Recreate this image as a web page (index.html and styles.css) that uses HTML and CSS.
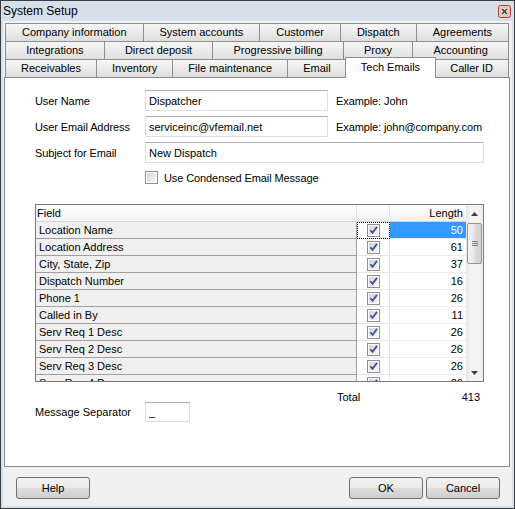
FILE: index.html
```html
<!DOCTYPE html>
<html lang="en">
<head>
  <meta charset="UTF-8">
  <meta name="viewport" content="width=device-width, initial-scale=1.0">
  <title>System Setup</title>
  <link rel="stylesheet" href="styles.css">
</head>
<body>
  <!-- shared checkbox drawings -->
  <svg class="defs" width="0" height="0">
    <defs>
      <linearGradient id="boxfill" x1="0" y1="0" x2="1" y2="1">
        <stop offset="0" stop-color="#d4d4d4"/>
        <stop offset="1" stop-color="#f8f8f8"/>
      </linearGradient>
      <symbol id="box" viewBox="0 0 13 13">
        <rect x="0.5" y="0.5" width="12" height="12" fill="#fff" stroke="#8f8f8f"/>
        <rect x="2" y="2" width="9" height="9" fill="url(#boxfill)"/>
      </symbol>
      <symbol id="check" viewBox="0 0 13 13">
        <use href="#box"/>
        <path d="M3.3 6.2l2.2 2.7 4.5-6" fill="none" stroke="#3d51a3" stroke-width="1.8"/>
      </symbol>
    </defs>
  </svg>

  <div class="window">
    <div class="titlebar">
      <span>System Setup</span>
      <svg class="close" width="13" height="13" viewBox="0 0 13 13">
        <rect x="0.5" y="0.5" width="12" height="12" rx="2" fill="#ecc3bb" stroke="#a3473c"/>
        <path d="M4 4l5 5M9 4l-5 5" stroke="#fff" stroke-width="3"/>
        <path d="M4 4l5 5M9 4l-5 5" stroke="#333" stroke-width="1.5"/>
      </svg>
    </div>

    <div class="client">
      <!-- tab rows -->
      <div class="tabs">
        <div class="tab-row">
          <div class="tab">Company information</div>
          <div class="tab">System accounts</div>
          <div class="tab">Customer</div>
          <div class="tab">Dispatch</div>
          <div class="tab">Agreements</div>
        </div>
        <div class="tab-row">
          <div class="tab">Integrations</div>
          <div class="tab">Direct deposit</div>
          <div class="tab">Progressive billing</div>
          <div class="tab">Proxy</div>
          <div class="tab">Accounting</div>
        </div>
        <div class="tab-row">
          <div class="tab">Receivables</div>
          <div class="tab">Inventory</div>
          <div class="tab">File maintenance</div>
          <div class="tab">Email</div>
          <div class="tab active">Tech Emails</div>
          <div class="tab">Caller ID</div>
        </div>
      </div>

      <div class="panel">
        <div class="form">
          <label>User Name</label>
          <input class="field" type="text" value="Dispatcher">
          <span>Example: John</span>

          <label>User Email Address</label>
          <input class="field" type="text" value="serviceinc@vfemail.net">
          <span>Example: john@company.com</span>

          <label>Subject for Email</label>
          <input class="field wide" type="text" value="New Dispatch">

          <div class="check-line">
            <svg class="cb"><use href="#box"/></svg>
            <span>Use Condensed Email Message</span>
          </div>
        </div>

        <div class="grid">
          <div class="grid-body">
            <div class="grid-head">
              <div class="c-field">Field</div>
              <div class="c-chk"></div>
              <div class="c-len">Length</div>
            </div>
            <div class="grid-row">
              <div class="c-field">Location Name</div>
              <div class="c-chk focus"><svg class="cb"><use href="#check"/></svg></div>
              <div class="c-len selected">50</div>
            </div>
            <div class="grid-row">
              <div class="c-field">Location Address</div>
              <div class="c-chk"><svg class="cb"><use href="#check"/></svg></div>
              <div class="c-len">61</div>
            </div>
            <div class="grid-row">
              <div class="c-field">City, State, Zip</div>
              <div class="c-chk"><svg class="cb"><use href="#check"/></svg></div>
              <div class="c-len">37</div>
            </div>
            <div class="grid-row">
              <div class="c-field">Dispatch Number</div>
              <div class="c-chk"><svg class="cb"><use href="#check"/></svg></div>
              <div class="c-len">16</div>
            </div>
            <div class="grid-row">
              <div class="c-field">Phone 1</div>
              <div class="c-chk"><svg class="cb"><use href="#check"/></svg></div>
              <div class="c-len">26</div>
            </div>
            <div class="grid-row">
              <div class="c-field">Called in By</div>
              <div class="c-chk"><svg class="cb"><use href="#check"/></svg></div>
              <div class="c-len">11</div>
            </div>
            <div class="grid-row">
              <div class="c-field">Serv Req 1 Desc</div>
              <div class="c-chk"><svg class="cb"><use href="#check"/></svg></div>
              <div class="c-len">26</div>
            </div>
            <div class="grid-row">
              <div class="c-field">Serv Req 2 Desc</div>
              <div class="c-chk"><svg class="cb"><use href="#check"/></svg></div>
              <div class="c-len">26</div>
            </div>
            <div class="grid-row">
              <div class="c-field">Serv Req 3 Desc</div>
              <div class="c-chk"><svg class="cb"><use href="#check"/></svg></div>
              <div class="c-len">26</div>
            </div>
            <div class="grid-row">
              <div class="c-field">Serv Req 4 Desc</div>
              <div class="c-chk"><svg class="cb"><use href="#check"/></svg></div>
              <div class="c-len">26</div>
            </div>
          </div>
          <div class="vscroll">
            <div class="sb-btn">
              <svg width="7" height="4" viewBox="0 0 7 4"><path d="M0 4h7L3.5 0z" fill="#3c3c3c"/></svg>
            </div>
            <div class="sb-thumb"><span class="sb-grip"></span></div>
            <div class="sb-btn down">
              <svg width="7" height="4" viewBox="0 0 7 4"><path d="M0 0h7L3.5 4z" fill="#3c3c3c"/></svg>
            </div>
          </div>
        </div>

        <div class="total-row">
          <span>Total</span>
          <span class="total-val">413</span>
        </div>

        <div class="sep-row">
          <label>Message Separator</label>
          <input class="field small" type="text" value="_">
        </div>
      </div>

      <div class="footer">
        <button class="btn">Help</button>
        <span class="spacer"></span>
        <button class="btn">OK</button>
        <button class="btn">Cancel</button>
      </div>
    </div>
  </div>
</body>
</html>
```

FILE: styles.css
```css
body {
  margin: 0;
  font-family: "Liberation Sans", Arial, sans-serif;
  font-size: 11px;
  color: #000;
}

.defs {
  position: absolute;
  width: 0;
  height: 0;
}

/* window frame */
.window {
  width: 515px;
  height: 509px;
  box-sizing: border-box;
  border: 1px solid #3a3e44;
  background: #d6e0eb;
  padding: 0 2px 2px;
  display: flex;
  flex-direction: column;
}

.titlebar {
  height: 20px;
  flex: none;
  display: flex;
  align-items: center;
  justify-content: space-between;
  font-size: 12px;
  padding-right: 1px;
}

.close {
  display: block;
}

.client {
  flex: 1;
  background: #f0f0f0;
  padding: 2px 2px 0 1px;
  display: flex;
  flex-direction: column;
}

/* tabs */
.tabs {
  margin: 0 1px;
}

.tab-row {
  display: flex;
  height: 18px;
  align-items: flex-start;
}

.tab {
  flex: 1 1 auto;
  height: 18px;
  box-sizing: border-box;
  border: 1px solid #8e8f8f;
  border-bottom: none;
  margin-right: -1px;
  padding: 0 4px;
  background: linear-gradient(#f6f6f6, #ebebeb 50%, #dedede);
  text-align: center;
  line-height: 16px;
  white-space: nowrap;
}

.tab:last-child {
  margin-right: 0;
}

.tab.active {
  position: relative;
  z-index: 1;
  height: 21px;
  margin: -2px -2px 0 -1px;
  background: #fff;
  line-height: 19px;
}

/* page */
.panel {
  height: 390px;
  flex: none;
  box-sizing: border-box;
  border: 1px solid #898c95;
  background: #fff;
  padding: 12px 0 0 30px;
}

.form {
  display: grid;
  grid-template-columns: 102px 183px auto;
  column-gap: 8px;
  row-gap: 5px;
  align-items: center;
  letter-spacing: -0.1px;
}

.field {
  height: 21px;
  box-sizing: border-box;
  border: 1px solid #dbdfe6;
  border-top-color: #abadb3;
  padding: 0 3px;
  margin: 0;
  font: inherit;
  color: #000;
  background: #fff;
}

.field.wide {
  grid-column: 2 / 4;
  width: 339px;
}

.field.small {
  width: 45px;
  height: 20px;
}

.check-line {
  grid-column: 2 / 4;
  display: flex;
  align-items: center;
  gap: 6px;
  margin-top: 3px;
}

.cb {
  width: 13px;
  height: 13px;
  display: block;
}

/* field grid */
.grid {
  width: 449px;
  height: 178px;
  box-sizing: border-box;
  border: 1px solid #7a7a7a;
  display: flex;
  margin-top: 20px;
}

.grid-body {
  width: 430px;
  overflow: hidden;
}

.grid-head,
.grid-row {
  display: grid;
  grid-template-columns: 321px 33px 76px;
  height: 17px;
  line-height: 16px;
}

.grid-head > div {
  background: linear-gradient(#ffffff, #f2f3f5);
  border-right: 1px solid #e3e3e3;
  border-bottom: 1px solid #d5d5d5;
}

.grid-head .c-field {
  padding-left: 1px;
}

.grid-head .c-len {
  border-right: none;
  text-align: right;
  padding-right: 3px;
}

.grid-row .c-field {
  background: #f0f0f0;
  border-right: 1px solid #a0a0a0;
  border-bottom: 1px solid #a0a0a0;
  padding-left: 3px;
  white-space: nowrap;
  overflow: hidden;
}

.grid-row .c-chk {
  border-right: 1px solid #e6e6e6;
  border-bottom: 1px solid #e6e6e6;
  display: flex;
  align-items: center;
  justify-content: center;
}

.grid-row .c-len {
  border-bottom: 1px solid #ececec;
  text-align: right;
  padding-right: 3px;
}

.c-chk.focus {
  outline: 1px dotted #000;
  outline-offset: -1px;
}

.c-len.selected {
  background: #3399ff;
  color: #fff;
}

/* scrollbar */
.vscroll {
  width: 17px;
  display: flex;
  flex-direction: column;
  background: linear-gradient(to right, #e6e6e6, #f3f3f3 25%, #f3f3f3 75%, #e9e9e9);
}

.sb-btn {
  height: 17px;
  flex: none;
  display: flex;
  align-items: center;
  justify-content: center;
}

.sb-btn.down {
  margin-top: auto;
}

.sb-thumb {
  height: 41px;
  margin: 1px 1px 0;
  box-sizing: border-box;
  border: 1px solid #979797;
  border-radius: 2px;
  background: linear-gradient(to right, #f4f4f4, #e9e9e9 45%, #dadada 55%, #d2d2d2);
  display: flex;
  align-items: center;
  justify-content: center;
}

.sb-grip {
  width: 6px;
  height: 5px;
  background: repeating-linear-gradient(#7c7c7c 0 1px, transparent 1px 2px);
}

/* totals and separator */
.total-row {
  width: 449px;
  box-sizing: border-box;
  display: flex;
  padding: 0 4px 0 302px;
  height: 12px;
  line-height: 12px;
  margin-top: 9px;
}

.total-val {
  flex: 1;
  text-align: right;
}

.sep-row {
  display: flex;
  align-items: center;
  margin-top: -1px;
}

.sep-row label {
  width: 110px;
}

/* dialog buttons */
.footer {
  flex: 1;
  display: flex;
  align-items: flex-start;
  padding: 10px 10px 0 12px;
  gap: 3px;
}

.spacer {
  flex: 1;
}

.btn {
  width: 74px;
  height: 22px;
  border: 1px solid #707070;
  border-radius: 3px;
  background: linear-gradient(#f2f2f2, #ebebeb 50%, #dddddd 50%, #cfcfcf);
  font: inherit;
  color: #000;
  padding: 0;
}
```
